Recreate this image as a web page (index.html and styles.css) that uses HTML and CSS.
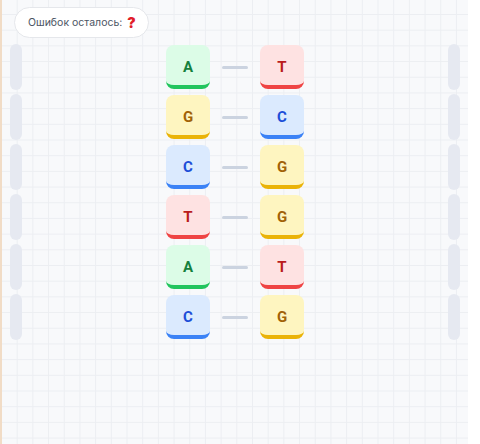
FILE: index.html
```html
<!DOCTYPE html>
<html lang="ru">
<head>
  <meta charset="UTF-8">
  <meta name="viewport" content="width=device-width, initial-scale=1.0">
  <title>ДНК</title>
  <link rel="stylesheet" href="styles.css">
</head>
<body>

  <div class="board">
    <!-- Счётчик ошибок -->
    <div class="errors">
      Ошибок осталось: <span class="errors-mark">?</span>
    </div>

    <!-- Пары нуклеотидов -->
    <div class="pairs">
      <div class="pair-row">
        <div class="rail"></div>
        <div class="pair">
          <div class="base base-a">A</div>
          <div class="bond"></div>
          <div class="base base-t">T</div>
        </div>
        <div class="rail"></div>
      </div>
      <div class="pair-row">
        <div class="rail"></div>
        <div class="pair">
          <div class="base base-g">G</div>
          <div class="bond"></div>
          <div class="base base-c">C</div>
        </div>
        <div class="rail"></div>
      </div>
      <div class="pair-row">
        <div class="rail"></div>
        <div class="pair">
          <div class="base base-c">C</div>
          <div class="bond"></div>
          <div class="base base-g">G</div>
        </div>
        <div class="rail"></div>
      </div>
      <div class="pair-row">
        <div class="rail"></div>
        <div class="pair">
          <div class="base base-t">T</div>
          <div class="bond"></div>
          <div class="base base-g">G</div>
        </div>
        <div class="rail"></div>
      </div>
      <div class="pair-row">
        <div class="rail"></div>
        <div class="pair">
          <div class="base base-a">A</div>
          <div class="bond"></div>
          <div class="base base-t">T</div>
        </div>
        <div class="rail"></div>
      </div>
      <div class="pair-row">
        <div class="rail"></div>
        <div class="pair">
          <div class="base base-c">C</div>
          <div class="bond"></div>
          <div class="base base-g">G</div>
        </div>
        <div class="rail"></div>
      </div>
    </div>
  </div>

</body>
</html>
```

FILE: styles.css
```css
body {
  margin: 0;
  padding: 0;
  background-color: #fff;
  font-family: Inter, "Noto Sans", sans-serif;
}

.board {
  width: 468px;
  height: 444px;
  border-left: 2px solid #f1dcc6;
  background-color: #f8f9fb;
  background-image:
    linear-gradient(to right, #eceef2 1px, transparent 1px),
    linear-gradient(to bottom, #eceef2 1px, transparent 1px);
  background-size: 15.7px 15.7px;
  background-position: -1px -1.7px;
  box-sizing: border-box;
  overflow: hidden;
}

.errors {
  display: inline-flex;
  align-items: center;
  gap: 5px;
  height: 31px;
  margin: 7px 0 0 12px;
  padding: 0 12px 0 13px;
  background-color: #fff;
  border: 1px solid #e5e7eb;
  border-radius: 16px;
  font-size: 10.5px;
  color: #4b5563;
  box-sizing: border-box;
}

.errors-mark {
  color: #e11d2a;
  font-weight: 900;
  font-size: 14px;
}

.pairs {
  display: flex;
  flex-direction: column;
  gap: 4px;
  margin-top: 6px;
}

.pair-row {
  display: flex;
  justify-content: space-between;
  align-items: center;
  height: 46px;
  padding: 0 8px;
}

.rail {
  width: 12px;
  height: 46px;
  border-radius: 6px;
  background-color: #e6e9f1;
}

.pair {
  display: flex;
  align-items: center;
  gap: 12px;
}

.base {
  width: 44px;
  height: 44px;
  display: flex;
  align-items: center;
  justify-content: center;
  border-radius: 8px;
  border-bottom: 4px solid;
  box-sizing: border-box;
  font-family: Roboto, sans-serif;
  font-weight: bold;
  font-size: 15px;
  padding-top: 3px;
}

.base-a {
  background-color: #dcfce7;
  border-color: #22c55e;
  color: #15803d;
}

.base-t {
  background-color: #fee2e2;
  border-color: #ef4444;
  color: #b91c1c;
}

.base-g {
  background-color: #fef5c0;
  border-color: #eab308;
  color: #a16207;
}

.base-c {
  background-color: #dbeafe;
  border-color: #3b82f6;
  color: #1d4ed8;
}

.bond {
  width: 26px;
  height: 3px;
  border-radius: 2px;
  background-color: #cbd3e0;
}
```
